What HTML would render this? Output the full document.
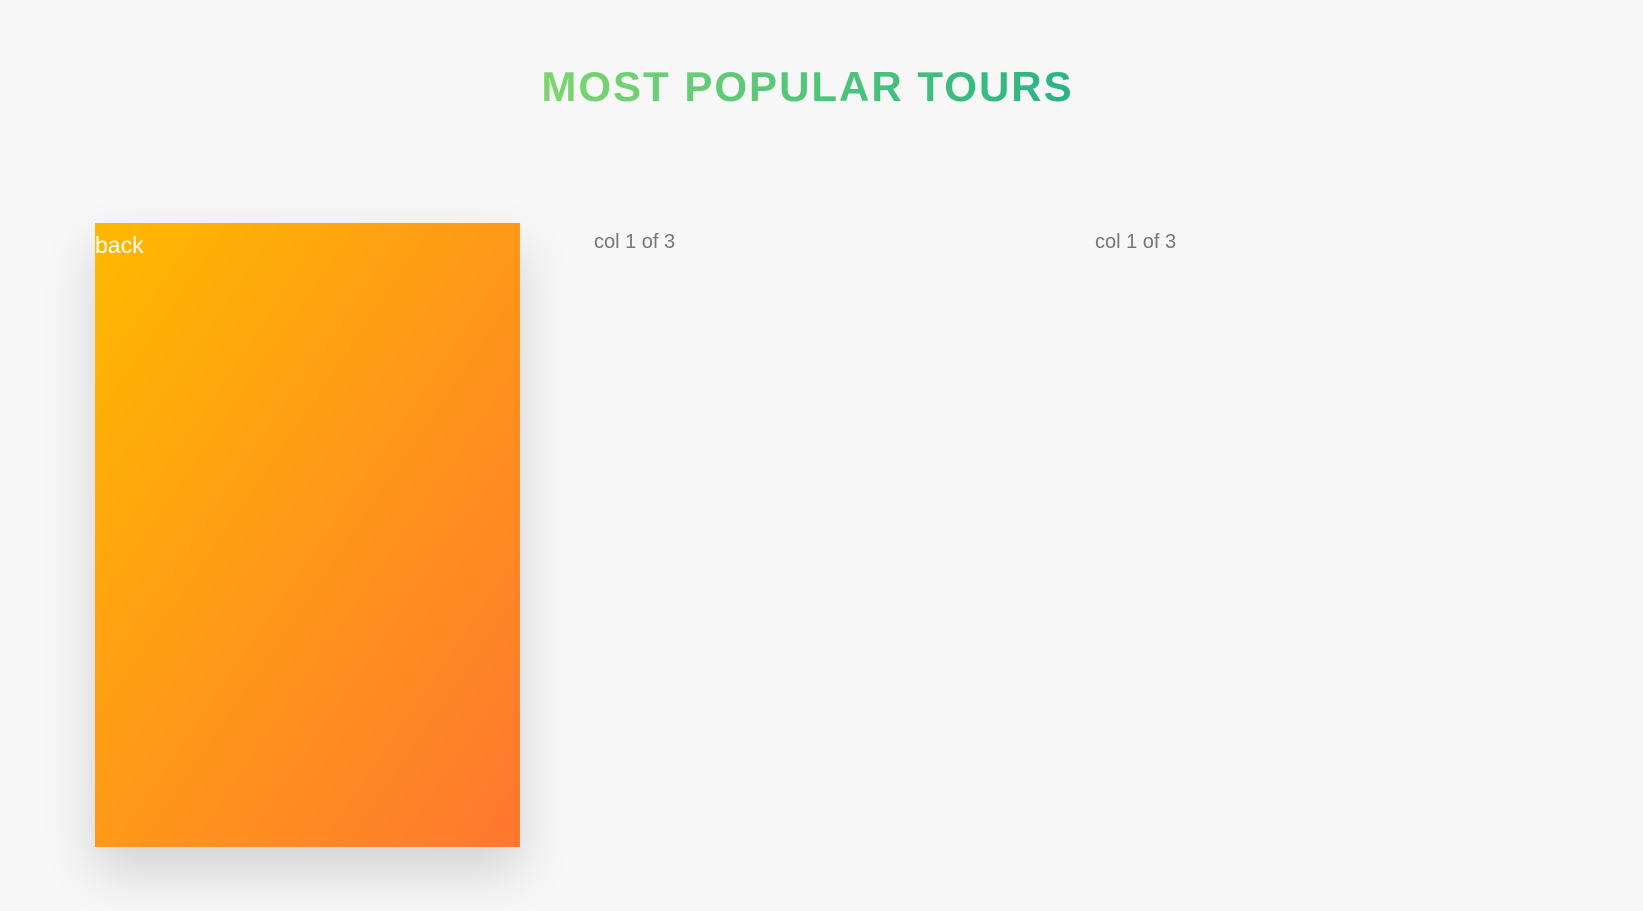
<!DOCTYPE html>
<html><head><meta charset="utf-8">
<style>
html,body{margin:0;padding:0;}
body{width:1643px;height:911px;background:#f7f7f7;font-family:"Liberation Sans",sans-serif;position:relative;overflow:hidden;}
h2{position:absolute;left:-28px;right:0;top:63px;margin:0;text-align:center;font-size:42px;font-weight:700;letter-spacing:2px;}
h2 span{background:linear-gradient(to right,#7ed56f,#28b485);-webkit-background-clip:text;background-clip:text;color:transparent;}
.card{position:absolute;left:95px;top:223px;width:425px;height:624px;background:linear-gradient(to bottom right,#ffb900,#ff7730);
box-shadow:0 24px 48px rgba(0,0,0,0.15);}
.card span{position:absolute;left:0;top:9px;color:#fff;font-size:23px;}
.col{position:absolute;top:231px;color:#777;font-size:20px;}
</style></head><body>
<h2><span>MOST POPULAR TOURS</span></h2>
<div class="card"><span>back</span></div>
<div class="col" style="left:594px">col 1 of 3</div>
<div class="col" style="left:1095px">col 1 of 3</div>
</body></html>
